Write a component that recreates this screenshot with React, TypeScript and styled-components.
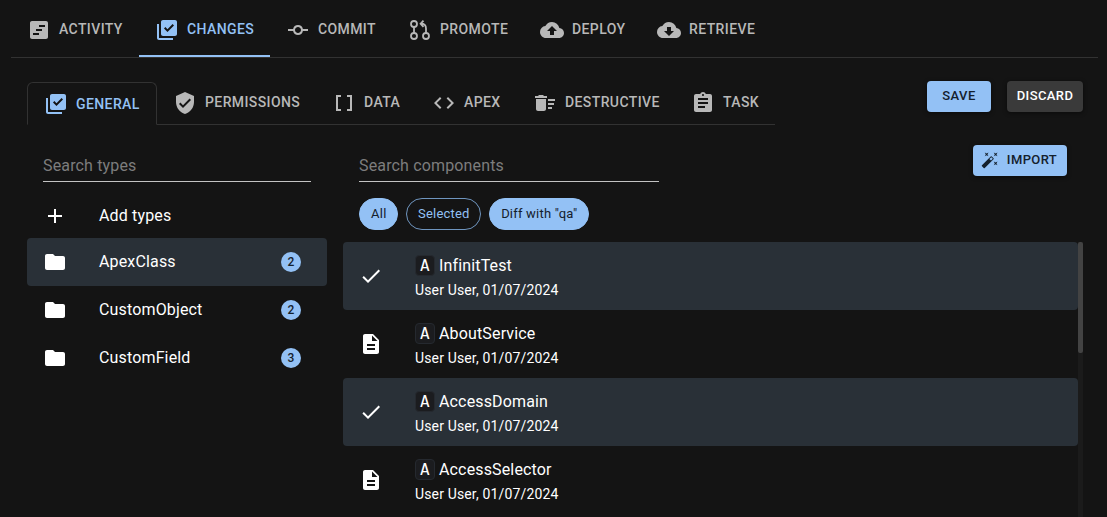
import React from "react";
import styled, { createGlobalStyle, css } from "styled-components";
import {
  MdViewTimeline, MdLibraryAddCheck, MdCommit, MdBackup, MdCloudDownload, MdVerifiedUser,
  MdDataArray, MdCode, MdDeleteSweep, MdAssignment, MdAutoFixHigh, MdAdd, MdFolder, MdCheck, MdDescription,
} from "react-icons/md";

const BLUE = "#93c1f5";

const Global = createGlobalStyle`
  * { box-sizing: border-box; }
  html, body { margin: 0; background: #141414; }
  body { font-family: Roboto, sans-serif; color: #fff; overflow: hidden; }
  button, input { font-family: inherit; }
`;

const Page = styled.main`
  height: 517px;
  padding: 0 9px 0 11px;
  overflow: hidden;
  display: flex;
  flex-direction: column;
`;

const MainTabs = styled.nav`
  display: flex;
  height: 58px;
  border-bottom: 1px solid #323232;
`;

const MainTab = styled.button<{ $w: number; $active?: boolean }>`
  display: flex;
  align-items: center;
  width: ${(p) => p.$w}px;
  height: 57px;
  padding: 2px 0 0 16px;
  border: 0;
  border-bottom: 2px solid ${(p) => (p.$active ? BLUE : "transparent")};
  background: none;
  color: ${(p) => (p.$active ? BLUE : "#b8b8b8")};
  svg { flex: none; width: 24px; height: 24px; margin-top: 2px; }
`;

const TabLabel = styled.span`
  margin-left: 8px;
  font-size: 14px;
  font-weight: 500;
  line-height: 20px;
  letter-spacing: 0.4px;
  white-space: nowrap;
`;

const SubBar = styled.div`
  display: flex;
  justify-content: space-between;
  align-items: flex-start;
  padding: 23px 15px 0 16px;
  height: 67px;
`;

const SubTabs = styled.nav`
  display: flex;
  width: 748px;
  height: 44px;
  padding-top: 1px;
`;

const SubTab = styled.button<{ $w: number; $active?: boolean }>`
  display: flex;
  align-items: center;
  width: ${(p) => p.$w}px;
  height: 43px;
  padding: 0 0 1px 16px;
  border: 0;
  border-bottom: 1px solid #323232;
  background: none;
  color: #b8b8b8;
  svg { flex: none; width: 24px; height: 24px; margin-top: 1px; }
  ${TabLabel} { margin-bottom: ${(p) => (p.$active ? 0 : 2)}px; }
  ${(p) => p.$active && css`
    padding-bottom: 0;
    border: 1px solid #323232;
    border-bottom-color: transparent;
    border-radius: 6px 6px 0 0;
    color: ${BLUE};
  `}
`;

const Actions = styled.div`
  display: flex;
  gap: 16px;
`;

const Button = styled.button<{ $w: number; $dark?: boolean }>`
  display: flex;
  align-items: center;
  justify-content: center;
  width: ${(p) => p.$w}px;
  height: 31px;
  padding: 0 0 2px;
  border: 0;
  border-radius: 4px;
  background: ${(p) => (p.$dark ? "#3a3a3a" : BLUE)};
  color: ${(p) => (p.$dark ? "#fff" : "#14202c")};
  font-size: 13px;
  font-weight: 500;
  letter-spacing: 0.4px;
  box-shadow: 0 1px 4px rgba(0, 0, 0, 0.5);
  svg { width: 18px; height: 18px; margin: 1px 8px 0 -2px; }
`;

const Content = styled.div`
  display: flex;
  gap: 16px;
  padding: 20px 15px 0 16px;
  flex: 1;
  min-height: 0;
`;

const Sidebar = styled.aside`
  width: 300px;
  flex: none;
`;

const Search = styled.input<{ $w: number }>`
  display: block;
  width: ${(p) => p.$w}px;
  height: 37px;
  margin: 0 0 0 16px;
  padding: 5px 0 0;
  border: 0;
  border-bottom: 1px solid #c3c3c3;
  outline: 0;
  background: none;
  color: #fff;
  font-size: 16px;
  letter-spacing: 0.15px;
  &::placeholder { color: #7d7d7d; opacity: 1; }
`;

const TypeList = styled.div`
  padding-top: 12px;
`;

const TypeRow = styled.div<{ $selected?: boolean; $h?: number }>`
  display: flex;
  align-items: center;
  height: ${(p) => p.$h ?? 48}px;
  padding: 0 26px 0 16px;
  border-radius: 4px;
  background: ${(p) => (p.$selected ? "#293037" : "transparent")};
  svg { width: 24px; height: 24px; }
`;

const TypeName = styled.span`
  flex: 1;
  margin-left: 32px;
  font-size: 16px;
  letter-spacing: 0.15px;
  line-height: 24px;
`;

const Count = styled.span`
  width: 20px;
  height: 20px;
  border-radius: 50%;
  background: ${BLUE};
  color: #14202c;
  font-size: 12px;
  font-weight: 500;
  line-height: 20px;
  text-align: center;
`;

const Main = styled.section`
  flex: 1;
  display: flex;
  flex-direction: column;
`;

const MainHead = styled.div`
  display: flex;
  justify-content: space-between;
  align-items: flex-start;
  padding-right: 16px;
`;

const Chips = styled.div`
  display: flex;
  gap: 8px;
  padding: 16px 0 12px 16px;
`;

const Chip = styled.button<{ $w: number; $outline?: boolean }>`
  width: ${(p) => p.$w}px;
  height: 32px;
  padding: 0 0 1px;
  border: 1px solid ${(p) => (p.$outline ? "#6f95bf" : BLUE)};
  border-radius: 16px;
  background: ${(p) => (p.$outline ? "transparent" : BLUE)};
  color: ${(p) => (p.$outline ? BLUE : "#14202c")};
  font-size: 13px;
  letter-spacing: 0.2px;
  text-indent: 0.6px;
  white-space: nowrap;
`;

const Scroller = styled.div`
  display: flex;
  flex: 1;
  min-height: 0;
`;

const ComponentList = styled.div`
  width: 735px;
`;

const ComponentRow = styled.div<{ $selected?: boolean }>`
  display: flex;
  align-items: center;
  height: 68px;
  padding-left: 16px;
  border-radius: 4px;
  background: ${(p) => (p.$selected ? "#293037" : "transparent")};
  > svg { width: 24px; height: 24px; }
`;

const RowText = styled.div`
  margin-left: 32px;
  padding-top: 2px;
`;

const RowTitle = styled.div`
  display: flex;
  align-items: center;
  height: 24px;
  gap: 4px;
  font-size: 16px;
  letter-spacing: 0.15px;
`;

const Kind = styled.code`
  width: 20px;
  height: 21px;
  border: 1px solid #25292f;
  border-radius: 4px;
  background: #1b1c1f;
  font: 16px/19px "DejaVu Sans Mono", monospace;
  text-align: center;
`;

const RowMeta = styled.div`
  height: 24px;
  font-size: 14px;
  line-height: 26px;
  letter-spacing: 0.15px;
`;

const Track = styled.div`
  width: 5px;
  background: #1b1b1b;
`;

const Thumb = styled.div`
  height: 111px;
  border-radius: 2px;
  background: #434343;
`;

const PullRequestIcon = () => (
  <svg viewBox="0 0 24 24" fill="none" stroke="currentColor" strokeWidth="1.8">
    <circle cx="6" cy="6" r="3" />
    <circle cx="6" cy="18" r="3" />
    <circle cx="18" cy="18" r="3" />
    <path d="M6 9v6M18 15v-4.500Q18 5.700 13 5.700M15.500 2.600L12.600 5.700l2.900 3.100" />
  </svg>
);

const mainTabs = [
  { label: "ACTIVITY", icon: <MdViewTimeline />, w: 128 },
  { label: "CHANGES", icon: <MdLibraryAddCheck />, w: 131, active: true },
  { label: "COMMIT", icon: <MdCommit />, w: 122 },
  { label: "PROMOTE", icon: <PullRequestIcon />, w: 132 },
  { label: "DEPLOY", icon: <MdBackup />, w: 117 },
  { label: "RETRIEVE", icon: <MdCloudDownload />, w: 130 },
];

const subTabs = [
  { label: "GENERAL", icon: <MdLibraryAddCheck />, w: 130, active: true },
  { label: "PERMISSIONS", icon: <MdVerifiedUser />, w: 159 },
  { label: "DATA", icon: <MdDataArray />, w: 100 },
  { label: "APEX", icon: <MdCode />, w: 101 },
  { label: "DESTRUCTIVE", icon: <MdDeleteSweep />, w: 158 },
  { label: "TASK", icon: <MdAssignment />, w: 100 },
];

const types = [
  { name: "ApexClass", count: 2, selected: true },
  { name: "CustomObject", count: 2 },
  { name: "CustomField", count: 3 },
];

const components = [
  { name: "InfinitTest", selected: true },
  { name: "AboutService" },
  { name: "AccessDomain", selected: true },
  { name: "AccessSelector" },
];

export default function App() {
  return (
    <Page>
      <Global />
      <MainTabs>
        {mainTabs.map((t) => (
          <MainTab key={t.label} $w={t.w} $active={t.active}>
            {t.icon}
            <TabLabel>{t.label}</TabLabel>
          </MainTab>
        ))}
      </MainTabs>
      <SubBar>
        <SubTabs>
          {subTabs.map((t) => (
            <SubTab key={t.label} $w={t.w} $active={t.active}>
              {t.icon}
              <TabLabel>{t.label}</TabLabel>
            </SubTab>
          ))}
        </SubTabs>
        <Actions>
          <Button $w={64}>SAVE</Button>
          <Button $w={76} $dark>DISCARD</Button>
        </Actions>
      </SubBar>
      <Content>
        <Sidebar>
          <Search $w={268} placeholder="Search types" />
          <TypeList>
            <TypeRow $h={44}>
              <MdAdd />
              <TypeName>Add types</TypeName>
            </TypeRow>
            {types.map((t) => (
              <TypeRow key={t.name} $selected={t.selected}>
                <MdFolder />
                <TypeName>{t.name}</TypeName>
                <Count>{t.count}</Count>
              </TypeRow>
            ))}
          </TypeList>
        </Sidebar>
        <Main>
          <MainHead>
            <Search $w={300} placeholder="Search components" />
            <Button $w={94}><MdAutoFixHigh />IMPORT</Button>
          </MainHead>
          <Chips>
            <Chip $w={39}>All</Chip>
            <Chip $w={75} $outline>Selected</Chip>
            <Chip $w={100}>Diff with "qa"</Chip>
          </Chips>
          <Scroller>
            <ComponentList>
              {components.map((c) => (
                <ComponentRow key={c.name} $selected={c.selected}>
                  {c.selected ? <MdCheck /> : <MdDescription />}
                  <RowText>
                    <RowTitle><Kind>A</Kind>{c.name}</RowTitle>
                    <RowMeta>User User, 01/07/2024</RowMeta>
                  </RowText>
                </ComponentRow>
              ))}
            </ComponentList>
            <Track><Thumb /></Track>
          </Scroller>
        </Main>
      </Content>
    </Page>
  );
}
